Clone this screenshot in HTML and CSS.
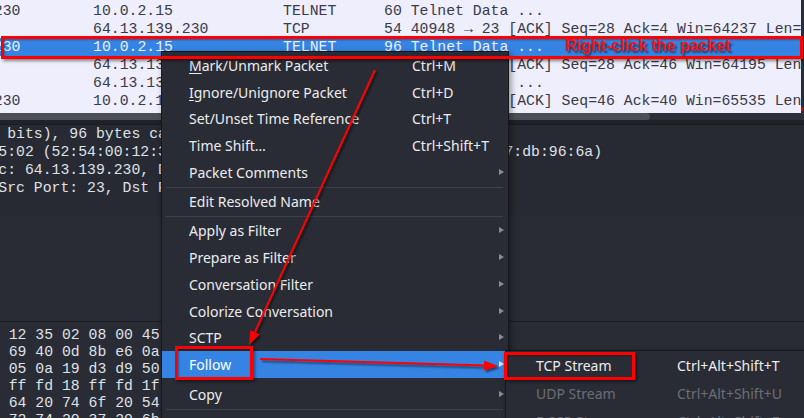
FILE: index.html
```html
<!DOCTYPE html>
<html>
<head>
<meta charset="utf-8">
<link rel="stylesheet" href="styles.css">
</head>
<body>
<div class="app">
  <div class="top">
    <div class="plist">
      <div class="rows">
        <div class="row"><span class="src">64.13.139.230</span><span class="dst">10.0.2.15</span><span class="proto">TELNET</span><span class="info">60 Telnet Data ...</span></div>
        <div class="row"><span class="src">10.0.2.15</span><span class="dst">64.13.139.230</span><span class="proto">TCP</span><span class="info">54 40948 → 23 [ACK] Seq=28 Ack=4 Win=64237 Len=0</span></div>
        <div class="row sel"><span class="src">64.13.139.230</span><span class="dst">10.0.2.15</span><span class="proto">TELNET</span><span class="info">96 Telnet Data ...</span></div>
        <div class="row"><span class="src">10.0.2.15</span><span class="dst">64.13.139.230</span><span class="proto">TCP</span><span class="info">54 40948 → 23 [ACK] Seq=28 Ack=46 Win=64195 Len=0</span></div>
        <div class="row"><span class="src">10.0.2.15</span><span class="dst">64.13.139.230</span><span class="proto">TELNET</span><span class="info">60 Telnet Data ...</span></div>
        <div class="row"><span class="src">64.13.139.230</span><span class="dst">10.0.2.15</span><span class="proto">TCP</span><span class="info">54 23 → 40948 [ACK] Seq=46 Ack=40 Win=65535 Len=0</span></div>
      </div>
    </div>
    <div class="vscroll"><div class="vmark"></div></div>
  </div>
  <div class="hscroll"><div class="thumb"></div></div>
  <div class="splitter"></div>
  <div class="details">
    <div class="tree">
      <div class="line">Frame 77: 96 bytes on wire (768 bits), 96 bytes captured (768 bits)</div>
      <div class="line">Ethernet II, Src: RealtekU_12:35:02 (52:54:00:12:35:02), Dst: PcsCompu_db:96:6a (08:00:27:db:96:6a)</div>
      <div class="line">Internet Protocol Version 4, Src: 64.13.139.230, Dst: 10.0.2.15</div>
      <div class="line">Transmission Control Protocol, Src Port: 23, Dst Port: 40948, Seq: 4, Ack: 28, Len: 42</div>
      <div class="line">Telnet</div>
    </div>
  </div>
  <div class="hex">
    <div class="hline">0000  08 00 27 db 96 6a 52 54 00 12 35 02 08 00 45 00</div>
    <div class="hline">0010  00 52 1c 7e 40 00 40 06 f2 69 40 0d 8b e6 0a 02</div>
    <div class="hline">0020  02 0f 00 17 9f f4 00 05 3c 05 0a 19 d3 d9 50 18</div>
    <div class="hline">0030  ff ff 9d 3b 00 00 ff fd 01 ff fd 18 ff fd 1f 0d</div>
    <div class="hline">0040  57 65 6c 63 6f 6d 65 20 61 64 20 74 6f 20 54 65</div>
    <div class="hline">0050  6e 65 74 20 70 6f 72 74 20 72 74 20 37 20 6b 0d</div>
  </div>

  <div class="menu">
    <div class="item"><span class="label"><u>M</u>ark/Unmark Packet</span><span class="key">Ctrl+M</span></div>
    <div class="item"><span class="label"><u>I</u>gnore/Unignore Packet</span><span class="key">Ctrl+D</span></div>
    <div class="item"><span class="label">Set/Unset Time Reference</span><span class="key">Ctrl+T</span></div>
    <div class="item"><span class="label">Time Shift…</span><span class="key">Ctrl+Shift+T</span></div>
    <div class="item sub"><span class="label">Packet Comments</span></div>
    <div class="sep"></div>
    <div class="item"><span class="label">Edit Resolved Name</span></div>
    <div class="sep"></div>
    <div class="item sub"><span class="label">Apply as Filter</span></div>
    <div class="item sub"><span class="label">Prepare as Filter</span></div>
    <div class="item sub"><span class="label">Conversation Filter</span></div>
    <div class="item sub"><span class="label">Colorize Conversation</span></div>
    <div class="item sub"><span class="label">SCTP</span></div>
    <div class="item sub hl"><span class="label">Follow</span></div>
    <div class="item sub copy"><span class="label">Copy</span></div>
    <div class="sep"></div>
    <div class="item"><span class="label">Protocol Preferences</span></div>
  </div>

  <div class="submenu">
    <div class="sitem"><span class="slabel">TCP Stream</span><span class="key">Ctrl+Alt+Shift+T</span></div>
    <div class="sitem dis"><span class="slabel">UDP Stream</span><span class="key">Ctrl+Alt+Shift+U</span></div>
    <div class="sitem dis"><span class="slabel">DCCP Stream</span><span class="key">Ctrl+Alt+Shift+E</span></div>
  </div>

  <div class="box box-row"></div>
  <div class="note">Right-click the packet</div>
  <div class="box box-follow"></div>
  <div class="box box-tcp"></div>

  <svg class="arrows" width="804" height="418" viewBox="0 0 804 418">
    <defs>
      <filter id="sh" x="-20%" y="-20%" width="140%" height="140%">
        <feDropShadow dx="2" dy="2" stdDeviation="1.2" flood-color="#000" flood-opacity="0.55"/>
      </filter>
    </defs>
    <g filter="url(#sh)">
      <line x1="375" y1="70" x2="254.8" y2="332.3" stroke="#ff0000" stroke-width="2"/>
      <polygon points="249,345 259.4,334.4 250.3,330.2" fill="#ff0000"/>
      <line x1="260" y1="359" x2="485" y2="365.6" stroke="#ff0000" stroke-width="2"/>
      <polygon points="498,366 483.8,370.4 484.2,360.8" fill="#ff0000"/>
    </g>
  </svg>
</div>
</body>
</html>
```

FILE: styles.css
```css
* { box-sizing: border-box; }
html, body { margin: 0; padding: 0; }
body {
  width: 804px;
  height: 418px;
  overflow: hidden;
  background: #2a2c35;
}
.app {
  position: relative;
  width: 804px;
  height: 418px;
  overflow: hidden;
  font-family: "Liberation Mono", monospace;
}

/* packet list */
.top {
  display: flex;
  height: 113px;
}
.plist {
  flex: 1;
  background: #eeeefc;
  overflow: hidden;
  padding-top: 2px;
}
.rows { margin-left: -95px; }
.row {
  display: flex;
  height: 18px;
  line-height: 18px;
  font-size: 14.8px;
  color: #3a3a48;
  white-space: pre;
}
.row .src { width: 188px; flex: none; }
.row .dst { width: 190px; flex: none; }
.row .proto { width: 101px; flex: none; }
.row .info { flex: none; }
.row.sel {
  background: #3584e4;
  color: #eef0ff;
}
.vscroll {
  width: 3px;
  background: #2b2d34;
  position: relative;
}
.vmark {
  position: absolute;
  left: 0;
  bottom: 2px;
  width: 2px;
  height: 4px;
  background: #c01010;
}

.hscroll {
  height: 7px;
  background: #2d3039;
}
.hscroll .thumb {
  width: 650px;
  height: 7px;
  background: #4e4f56;
  border-radius: 0 4px 4px 0;
}
.splitter {
  height: 5px;
  background: #202229;
  border-bottom: 1px solid #1a1c21;
}

/* details */
.details {
  height: 196px;
  background: #2a2c35;
}
.tree {
  background: #272a32;
  height: 91px;
}
.line {
  height: 18px;
  line-height: 18px;
  font-size: 14.8px;
  color: #dfe1e8;
  white-space: pre;
  margin-left: -277px;
}

/* hex */
.hex {
  border-top: 1px solid #1a1c21;
  height: 100px;
  background: #2a2c35;
  padding-top: 4.5px;
}
.hline {
  height: 17px;
  line-height: 17px;
  font-size: 14.8px;
  color: #dfe1e8;
  white-space: pre;
  margin-left: -284.4px;
}

/* context menu */
.menu {
  position: absolute;
  left: 161px;
  top: 51px;
  width: 348px;
  height: 380px;
  background: #2a2c35;
  border: 1px solid #16171c;
  box-shadow: 2px 2px 6px rgba(0,0,0,0.4);
  font-family: "Noto Sans", sans-serif;
  font-size: 14px;
  color: #ececf0;
}
.item {
  position: relative;
  display: flex;
  align-items: center;
  height: 26.75px;
  padding-left: 27px;
  white-space: nowrap;
}
.item .label { width: 223px; flex: none; }
.item u { text-underline-offset: 2px; }
.item.sub::after {
  content: "";
  position: absolute;
  left: 337px;
  top: 50%;
  margin-top: -3.5px;
  border-left: 5px solid #8b8d96;
  border-top: 3.5px solid transparent;
  border-bottom: 3.5px solid transparent;
}
.item.hl {
  background: #3584e4;
  color: #ffffff;
}
.item.hl::after { border-left-color: #dde6f5; }
.item.copy { margin-top: 3px; }
.sep {
  height: 1px;
  margin: 0.75px 5px 0.75px 4px;
  background: #3e404a;
}

/* submenu */
.submenu {
  position: absolute;
  left: 505px;
  top: 350px;
  width: 310px;
  height: 80px;
  background: #2a2c35;
  border: 1px solid #16171c;
  box-shadow: 2px 2px 6px rgba(0,0,0,0.4);
  font-family: "Noto Sans", sans-serif;
  font-size: 14px;
  color: #ececf0;
}
.sitem {
  display: flex;
  align-items: center;
  height: 28px;
  padding-left: 30px;
  white-space: nowrap;
}
.sitem .slabel { width: 141px; flex: none; }
.sitem.dis { color: #6c6e77; }

/* annotations */
.box {
  position: absolute;
  border: 3px solid #ff0000;
  box-shadow: 2px 2px 3px rgba(0,0,0,0.45), inset 1px 1px 2px rgba(0,0,0,0.3);
}
.box-row { left: 1px; top: 36px; width: 802px; height: 23px; }
.box-follow { left: 175px; top: 346px; width: 78px; height: 34px; }
.box-tcp { left: 504px; top: 352px; width: 131px; height: 28px; }
.note {
  position: absolute;
  left: 565px;
  top: 36px;
  line-height: 20px;
  font-family: "Liberation Sans", Arial, sans-serif;
  font-size: 16px;
  font-weight: bold;
  color: #f01414;
  text-shadow: 2px 2px 2px rgba(0,0,0,0.55);
  white-space: nowrap;
}
.arrows {
  position: absolute;
  left: 0;
  top: 0;
  pointer-events: none;
}
```
